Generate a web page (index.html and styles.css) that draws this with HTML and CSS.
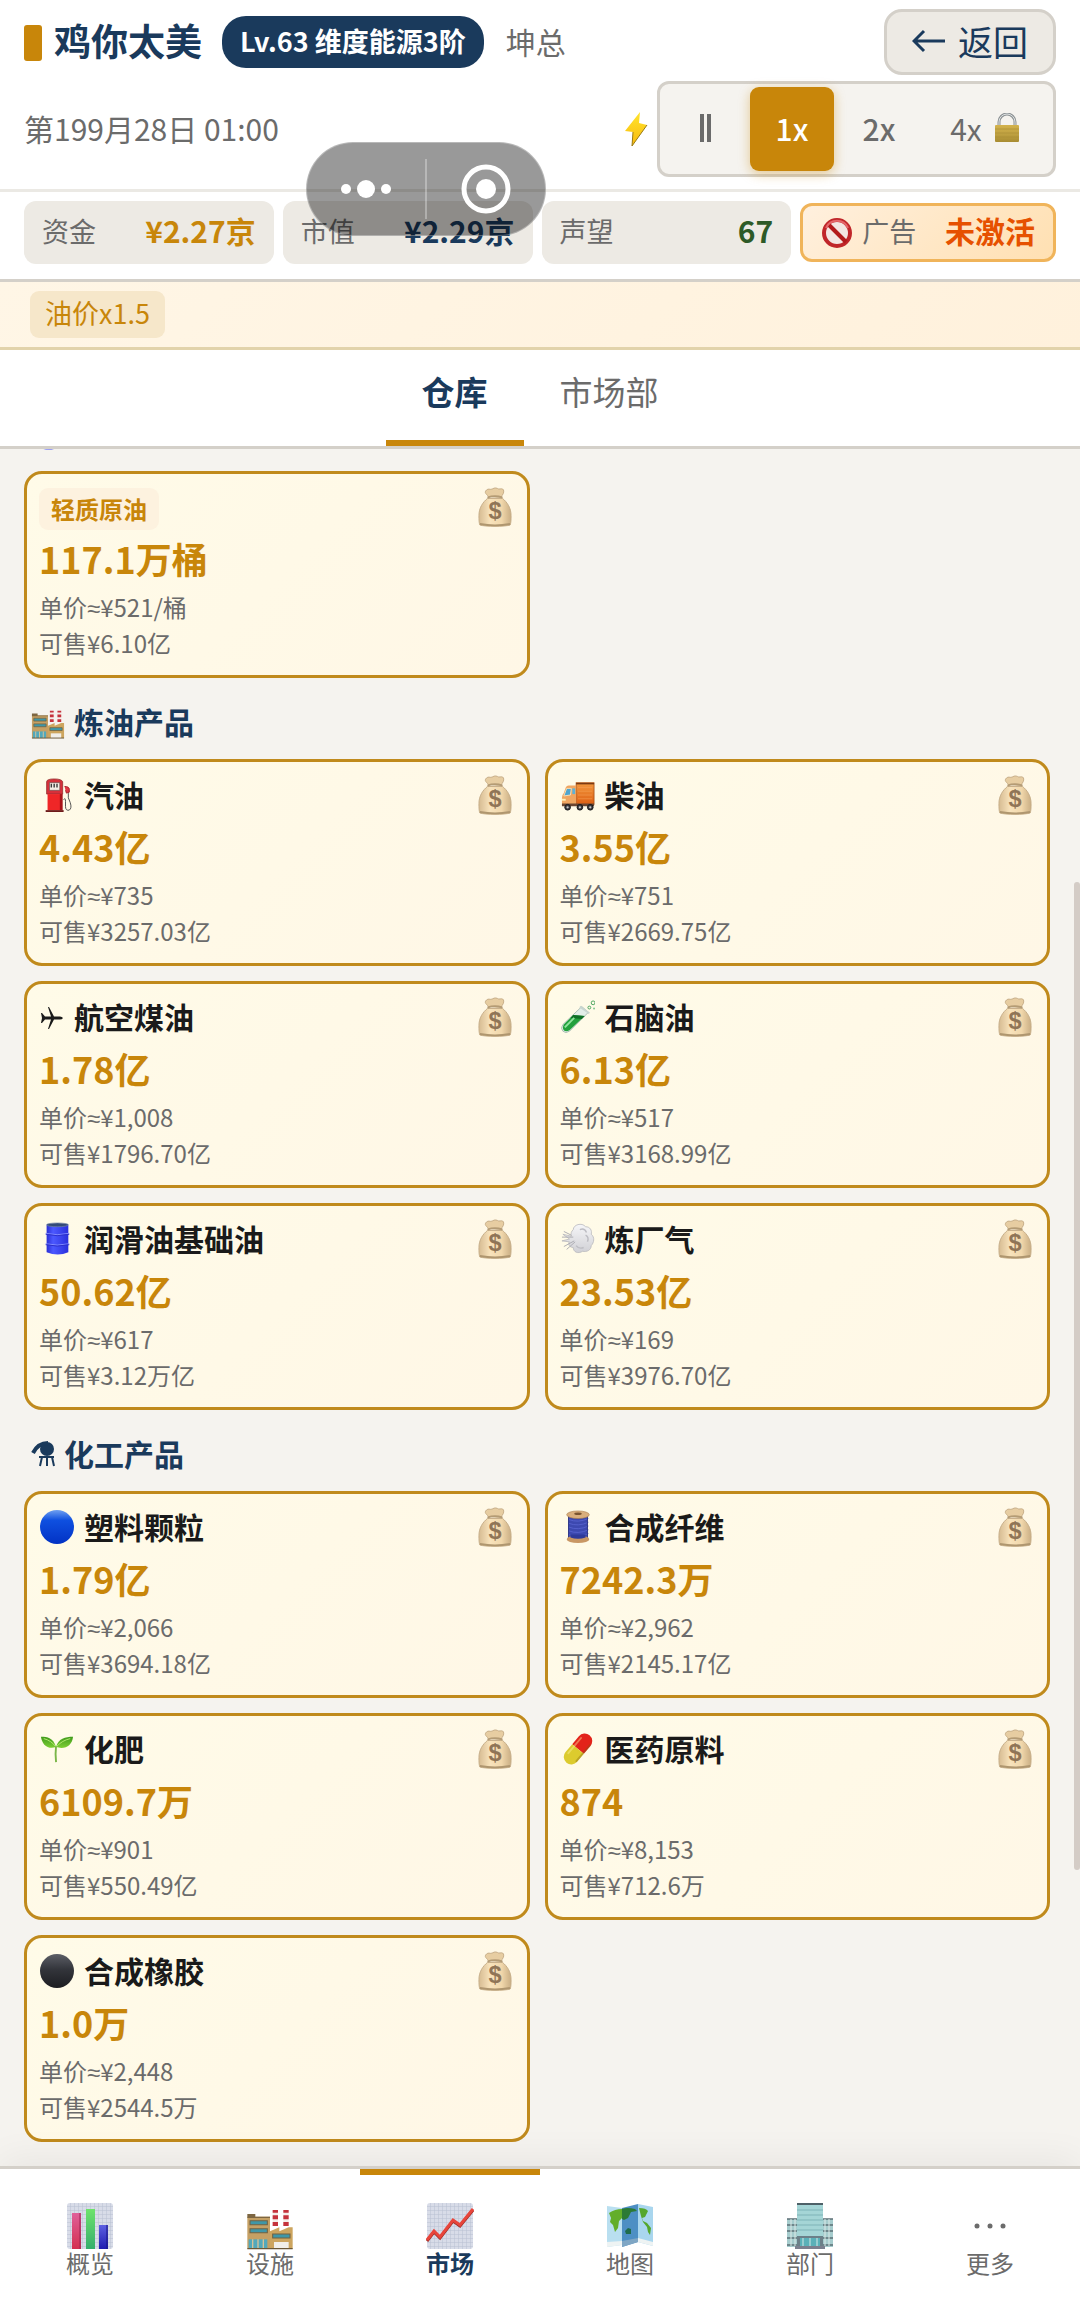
FILE: index.html
```html
<!DOCTYPE html>
<html lang="zh-CN">
<head>
    <meta charset="UTF-8">
    <meta name="viewport" content="width=device-width, initial-scale=1.0">
    <title>仓库</title>
    <link rel="stylesheet" href="styles.css">
</head>
<body>
    <!-- Shared gradients -->
    <svg class="defs" aria-hidden="true">
        <defs>
            <linearGradient id="gBag" x1="0" y1="0" x2="1" y2="0">
                <stop offset="0" stop-color="#c9a877"/><stop offset=".35" stop-color="#f6dcae"/><stop offset=".7" stop-color="#edcd98"/><stop offset="1" stop-color="#b99765"/>
            </linearGradient>
            <linearGradient id="gBolt" x1="0" y1="0" x2="0" y2="1">
                <stop offset="0" stop-color="#ffe52e"/><stop offset="1" stop-color="#f9b90c"/>
            </linearGradient>
            <linearGradient id="gLock" x1="0" y1="0" x2="0" y2="1">
                <stop offset="0" stop-color="#d3b24c"/><stop offset=".5" stop-color="#c0a242"/><stop offset="1" stop-color="#a88c32"/>
            </linearGradient>
            <linearGradient id="gDrum" x1="0" y1="0" x2="1" y2="0">
                <stop offset="0" stop-color="#2a2fd6"/><stop offset=".3" stop-color="#4b58ff"/><stop offset="1" stop-color="#2a30dc"/>
            </linearGradient>
            <linearGradient id="gBlue" x1="0" y1="0" x2="0" y2="1">
                <stop offset="0" stop-color="#6fa0f0"/><stop offset=".3" stop-color="#0f50e0"/><stop offset="1" stop-color="#0232c4"/>
            </linearGradient>
            <linearGradient id="gBlack" x1="0" y1="0" x2="0" y2="1">
                <stop offset="0" stop-color="#5c5e66"/><stop offset=".45" stop-color="#33353b"/><stop offset="1" stop-color="#1c1d21"/>
            </linearGradient>
            <linearGradient id="gLeaf" x1="0" y1="0" x2="0" y2="1">
                <stop offset="0" stop-color="#3f9a1c"/><stop offset="1" stop-color="#7fcf35"/>
            </linearGradient>
            <linearGradient id="gPuff" x1="0" y1="0" x2="0" y2="1">
                <stop offset="0" stop-color="#f6f6f8"/><stop offset="1" stop-color="#d0d0d5"/>
            </linearGradient>
            <linearGradient id="gTruck" x1="0" y1="0" x2="0" y2="1">
                <stop offset="0" stop-color="#f39a3e"/><stop offset="1" stop-color="#dd5f14"/>
            </linearGradient>
            <linearGradient id="gPink" x1="0" y1="0" x2="0" y2="1">
                <stop offset="0" stop-color="#e0609a"/><stop offset="1" stop-color="#d42f50"/>
            </linearGradient>
            <linearGradient id="gGreen" x1="0" y1="0" x2="0" y2="1">
                <stop offset="0" stop-color="#6ee36c"/><stop offset="1" stop-color="#35ae6c"/>
            </linearGradient>
            <linearGradient id="gIndigo" x1="0" y1="0" x2="0" y2="1">
                <stop offset="0" stop-color="#5d60e2"/><stop offset="1" stop-color="#1f1cb0"/>
            </linearGradient>
            <pattern id="pGrid" width="4" height="4" patternUnits="userSpaceOnUse">
                <rect width="4" height="4" fill="#d8dce8"/>
                <path d="M0 0H4M0 0V4" stroke="#b8c0d2" stroke-width="1"/>
            </pattern>
        </defs>
    </svg>

    <!-- Icon sprite -->
    <svg class="sprite" aria-hidden="true">
        <symbol id="i-bag" viewBox="0 0 36 42">
            <path d="M10 12C5 16 1 22 1 30c0 4 0 8 1 10 5 2 27 2 32 0 1-2 1-6 1-10 0-8-4-14-9-18z" fill="url(#gBag)" stroke="#b39468" stroke-width="1"/>
            <path d="M11 10C9 7 6 6 9 3c2-2 4 0 6-1 3-2 5-1 7 0 2 0 4-1 5 1 1 3-1 5-3 8z" fill="#e0bf8b" stroke="#b39468" stroke-width="1"/>
            <path d="M10 11q8-3 16 0" fill="none" stroke="#9c7d50" stroke-width="2"/>
            <path d="M2 39q16 3 32 0" fill="none" stroke="#957648" stroke-width="2"/>
            <text x="18" y="34" text-anchor="middle" class="bag-sign">$</text>
        </symbol>
        <symbol id="i-bolt" viewBox="0 0 24 36">
            <path d="M16 1 1 20l8 1-1 14L23 14l-8-2z" fill="url(#gBolt)"/>
            <path d="m9 21-1 14L23 14" fill="none" stroke="#9a7a14" stroke-width="1"/>
        </symbol>
        <symbol id="i-lock" viewBox="0 0 26 30">
            <path d="M5 13V9a8 8 0 0 1 16 0v4" fill="none" stroke="#8d9294" stroke-width="3"/>
            <path d="M5 13V9a8 8 0 0 1 16 0v4" fill="none" stroke="#dfe3e4" stroke-width="1"/>
            <rect x="1" y="12" width="24" height="17" rx="1" fill="url(#gLock)"/>
            <path d="M1 16h24M1 20h24M1 24h24" stroke="#a88c34" stroke-width="1" opacity=".6"/>
        </symbol>
        <symbol id="i-ban" viewBox="0 0 32 32">
            <circle cx="16" cy="16" r="13" fill="#f3e6e2" stroke="#c0262a" stroke-width="4"/>
            <path d="m7 7 18 18" stroke="#b21a1c" stroke-width="4"/>
            <path d="M5 11a12 12 0 0 1 22 0" fill="none" stroke="#e5676a" stroke-width="2"/>
        </symbol>
        <symbol id="i-drum" viewBox="0 0 36 36">
            <path d="M7 3h23v29q-11 5-23 0z" fill="url(#gDrum)"/>
            <ellipse cx="18.500" cy="3" rx="11.500" ry="2" fill="#334a78" stroke="#7386a8" stroke-width=".7"/>
            <path d="M6 12q12 3 25 0M6 23q12 3 25 0" fill="none" stroke="#8790ff" stroke-width="1"/>
            <path d="M6 13q12 3 25 0M6 24q12 3 25 0" fill="none" stroke="#2a2fc8" stroke-width="1"/>
        </symbol>
        <symbol id="i-factory" viewBox="0 0 36 36">
            <path d="M20 6h4v12h-4zM28 6h4v12h-4z" fill="#f3ece8"/>
            <path d="M20 6h4v2h-4zM20 10h4v3h-4zM20 15h4v3h-4zM28 6h4v2h-4zM28 10h4v3h-4zM28 15h4v3h-4z" fill="#c5323c"/>
            <path d="M1 11h17v24H1z" fill="#c5a064"/>
            <path d="M1 9h6v2H1zM1 11h17v1H1z" fill="#7d6642"/>
            <path d="m18 22 7-3v3l7-3h3v16H18z" fill="#cda55f"/>
            <path d="M3 14h13v3H3zM3 20h13v3H3zM20 24h13v3H20z" fill="#3f97a8" stroke="#716243" stroke-width=".8"/>
            <path d="M2 28h14v7H2z" fill="#52a8bb"/>
            <path d="M5 28v7M9 28v7M13 28v7" stroke="#d6c39a" stroke-width="1"/>
            <path d="M21 30h11v5H21z" fill="#f1efea"/>
            <path d="M1 35h34" stroke="#6b5838" stroke-width="1"/>
        </symbol>
        <symbol id="i-fuel" viewBox="0 0 36 36">
            <path d="M26 9q5 0 5 3v3l-3 1-1-3" fill="#e23a44" stroke="#a31a22" stroke-width="1"/>
            <path d="M25 23q2-3 2 2v5q0 5 4 4 3-2 1-8-3-5-2-10" fill="none" stroke="#4a4a4a" stroke-width="1"/>
            <path d="M7 4q0-3 8-3t9 3v13H7z" fill="#d6303a" stroke="#8f2a2c" stroke-width=".8"/>
            <rect x="10" y="5" width="11" height="8" fill="#f4efe6" stroke="#7d5555" stroke-width=".8"/>
            <path d="M12 6v4M15 6v4M18 6v4" stroke="#3a3a3a" stroke-width="1.500"/>
            <path d="M8 17h15v17H8z" fill="#ef2627"/>
            <path d="M21 17h3v17h-3z" fill="#a91419"/>
            <path d="M6 34h19v2H6z" fill="#6e1a1a"/>
        </symbol>
        <symbol id="i-truck" viewBox="0 0 36 36">
            <rect x="16" y="5" width="19" height="23" fill="url(#gTruck)" stroke="#a54a12" stroke-width=".8"/>
            <path d="M16 6h19" stroke="#7c3a10" stroke-width="1.500"/>
            <path d="M18 10h15M18 14h15M18 18h15M18 22h15" stroke="#f7a055" stroke-width=".6"/>
            <path d="M5 10q1-2 3-2h8v20H1v-7q0-3 2-5z" fill="#f0a661"/>
            <path d="M6 11h5l-1 7-7 1z" fill="#4fa5cf" stroke="#fbe0b5" stroke-width="1"/>
            <path d="M12 11h3v6h-3z" fill="#5fb2d6"/>
            <path d="M1 27h34v3H1z" fill="#6a4632"/>
            <path d="M1 22h4v2H1z" fill="#fff2b8"/>
            <circle cx="7" cy="31" r="3" fill="#3c3c40" stroke="#16161a"/><circle cx="20" cy="31" r="3" fill="#3c3c40" stroke="#16161a"/><circle cx="31" cy="31" r="3" fill="#3c3c40" stroke="#16161a"/>
            <circle cx="7" cy="31" r="1.200" fill="#c8c8cc"/><circle cx="20" cy="31" r="1.200" fill="#c8c8cc"/><circle cx="31" cy="31" r="1.200" fill="#c8c8cc"/>
        </symbol>
        <symbol id="i-plane" viewBox="0 0 26 36">
            <path d="M24 20q-1-1.500-3-1.500h-6L10 9H9l3 9.500H6L3 15H2l1 5-1 5h1l3-3.500h6L9 31h1l5-9.500h6q2 0 3-1.500z" fill="#1a1a1a"/>
        </symbol>
        <symbol id="i-tube" viewBox="0 0 36 36">
            <path d="m22 7 7 6L9 33q-4 3-7 0t0-7z" fill="#e3eee8" stroke="#a9bcb3" stroke-width="1"/>
            <path d="m13 16 12 1L9 32q-4 2-6 0t0-6z" fill="#22a03c"/>
            <path d="m13 16 12 1-3 3-12-1z" fill="#0f6f26"/>
            <path d="M4 29 14 19" stroke="#8fe39d" stroke-width="2"/>
            <path d="m20 7 10 7" stroke="#c9d6d0" stroke-width="2"/>
            <circle cx="30" cy="8" r="1.500" fill="none" stroke="#46a35a"/><circle cx="34" cy="3" r="2" fill="none" stroke="#46a35a"/><circle cx="35" cy="9" r="1" fill="#7cc48a"/>
        </symbol>
        <symbol id="i-puff" viewBox="0 0 36 36">
            <path d="M13 8c0-5 9-8 13-3 5 0 7 4 6 8 4 3 3 9 0 12 0 5-5 7-9 6-5 3-10 1-10-4-4 0-6-4-4-6L1 20l8-2-7-5 9 2c-1-3 0-5 2-7z" fill="url(#gPuff)" stroke="#b4b4ba" stroke-width=".8"/>
            <path d="M3 10l8 4M1 16h12M3 26l11-6M6 29l9-8" stroke="#aaaab0" stroke-width="1"/>
            <path d="M20 8q5-2 7 3M26 14q4 2 2 7M16 25q3 4 8 2" fill="none" stroke="#bdbdc3" stroke-width="1.500"/>
        </symbol>
        <symbol id="i-flask" viewBox="0 0 26 36">
            <circle cx="17" cy="14" r="7" fill="#1a3a5c"/>
            <path d="M18 8Q8 8 3 18" fill="none" stroke="#1a3a5c" stroke-width="4"/>
            <path d="M9 22h15M12 22l-2 9M17 22v9M22 22l2 9" stroke="#1a3a5c" stroke-width="2" fill="none"/>
        </symbol>
        <symbol id="i-blue" viewBox="0 0 36 36"><circle cx="18" cy="18" r="18" fill="url(#gBlue)"/></symbol>
        <symbol id="i-black" viewBox="0 0 36 36"><circle cx="18" cy="18" r="18" fill="url(#gBlack)"/></symbol>
        <symbol id="i-thread" viewBox="0 0 36 36">
            <path d="M8 6h20v24H8z" fill="#3d49b0"/>
            <path d="M8 10q10 4 21-1M8 14q10 4 21-1M8 18q10 4 21-1M8 22q10 4 21-1M8 26q10 4 21-1" fill="none" stroke="#5561cc" stroke-width="1"/>
            <path d="M8 6v24M28 6v24" stroke="#262f82" stroke-width="1"/>
            <ellipse cx="18" cy="31" rx="12" ry="4" fill="#c99764"/>
            <path d="M10 29q8 3 16 0v-3H10z" fill="#2f3a9a"/>
            <ellipse cx="18" cy="5" rx="12" ry="4" fill="#d9ae7c" stroke="#a87a48" stroke-width=".6"/>
            <ellipse cx="18" cy="4" rx="4" ry="1.300" fill="#7a5430"/>
        </symbol>
        <symbol id="i-seed" viewBox="0 0 36 36">
            <path d="M17 16C14 6 8 5 1 5c1 8 7 14 16 11z" fill="url(#gLeaf)"/>
            <path d="M17 16C19 7 27 5 35 5c-1 9-8 14-18 11z" fill="url(#gLeaf)"/>
            <path d="M4 7q8 2 13 9 6-7 15-9" fill="none" stroke="#b6ea72" stroke-width="1"/>
            <path d="M17 15q-1 8 0 17" fill="none" stroke="#7ab648" stroke-width="2"/>
        </symbol>
        <symbol id="i-pill" viewBox="0 0 36 36">
            <g transform="rotate(40 18 18)">
                <path d="M10 18V7a8 8 0 0 1 16 0v11z" fill="#e3231a"/>
                <path d="M10 18h16v11a8 8 0 0 1-16 0z" fill="#dccb2e"/>
                <path d="M13 7v21" stroke="#fff6a8" stroke-width="2" opacity=".4" stroke-linecap="round"/>
                <path d="M25 7v22" stroke="#7a5a10" stroke-width="2" opacity=".35" stroke-linecap="round"/>
            </g>
        </symbol>
        <symbol id="i-bars" viewBox="0 0 48 48">
            <rect x="1" y="1" width="46" height="46" rx="3" fill="url(#pGrid)"/>
            <path d="M6 11h9v36H6z" fill="url(#gPink)"/><path d="M20 7h9v40h-9z" fill="url(#gGreen)"/><path d="M33 23h9v24h-9z" fill="url(#gIndigo)"/>
            <path d="M14 11v36" stroke="#9c2352"/><path d="M41 23v24" stroke="#171480"/>
        </symbol>
        <symbol id="i-trend" viewBox="0 0 48 48">
            <rect x="1" y="1" width="46" height="46" rx="3" fill="url(#pGrid)"/>
            <path d="m1 38 7-9 6 6 13-17 7 5L47 7" fill="none" stroke="#9d2a24" stroke-width="3" transform="translate(0 1)"/>
            <path d="m1 38 7-9 6 6 13-17 7 5L47 7" fill="none" stroke="#e8453b" stroke-width="3"/>
        </symbol>
        <symbol id="i-map" viewBox="0 0 48 48">
            <path d="m1 4 15 2v37l-15 2z" fill="#b9dff0"/><path d="M16 6 32 2v38l-16 5z" fill="#4d8fc4"/><path d="m32 2 15 3v39l-15-4z" fill="#a9d6ee"/>
            <path d="m1 40 15-1v4l-15 2zM32 36l15 4v4l-15-4z" fill="#eef3f3"/><path d="m16 39 16-3v4l-16 5z" fill="#7fa6c4"/>
            <path d="M3 11q6-4 13-4v9l-3 3-1 7-3 4-2-7-3-3 1-4z" fill="#63ae2a"/>
            <path d="M16 7q5-2 13 0l2 2-6 1-3 6-4 2-2-1z" fill="#2c7a35"/>
            <path d="m19 29 3-3 3 1v5h-5z" fill="#1f6d4c"/>
            <path d="M33 6q7 0 9 3l-3 6-3 1 1 3 4 2 4 5-1 7-2-3-1-5-4-5-2-6z" fill="#55a72d"/>
        </symbol>
        <symbol id="i-office" viewBox="0 0 48 48">
            <path d="M1 17h12v28H1zM35 17h12v28H35z" fill="#a6cccd"/>
            <path d="M1 17h12M1 23h12M1 29h12M1 36h12M1 43h12M35 17h12M35 23h12M35 29h12M35 36h12M35 43h12" stroke="#5c6f75" stroke-width="1.500"/>
            <path d="M5 17v27M9 17v27M39 17v27M43 17v27" stroke="#dcebe9" stroke-width="1"/>
            <path d="M11 2h26v33H11z" fill="#a5d5d6"/>
            <path d="M11 2h26" stroke="#4e6168" stroke-width="2"/>
            <path d="M11 8h26M11 13h26M11 18h26M11 23h26M11 28h26" stroke="#7fb3b7" stroke-width="1"/>
            <path d="M11 34h26v10H11z" fill="#6c7f88"/>
            <path d="M14 36h20v8H14z" fill="#5ab0b8"/>
            <path d="M17 36v8M24 36v8M31 36v8" stroke="#d4e8e6" stroke-width="1"/>
            <path d="M9 44h30v3H9z" fill="#7b7f8e"/>
        </symbol>
        <symbol id="i-more" viewBox="0 0 48 48">
            <circle cx="11" cy="24" r="2.500" fill="#6b6b6b"/><circle cx="24" cy="24" r="2.500" fill="#6b6b6b"/><circle cx="37" cy="24" r="2.500" fill="#6b6b6b"/>
        </symbol>
    </svg>

    <header class="header">
        <div class="header-row">
            <h1 class="company">鸡你太美</h1>
            <span class="level-badge">Lv.63 维度能源3阶</span>
            <span class="owner">坤总</span>
            <button class="back-btn">
                <svg class="arrow" viewBox="0 0 34 28"><path d="M33 14H2M12 4 2 14l10 10" fill="none" stroke="#1a3a5c" stroke-width="3"/></svg>
                返回
            </button>
        </div>
        <div class="header-row">
            <span class="date">第199月28日 01:00</span>
            <svg class="bolt"><use href="#i-bolt"/></svg>
            <div class="speed">
                <button class="speed-btn" aria-label="暂停"><span class="pause"></span></button>
                <button class="speed-btn active">1x</button>
                <button class="speed-btn">2x</button>
                <button class="speed-btn locked">4x <svg class="lock"><use href="#i-lock"/></svg></button>
            </div>
        </div>
    </header>

    <div class="stats">
        <div class="stat"><span class="stat-label">资金</span><span class="stat-value gold">¥2.27京</span></div>
        <div class="stat"><span class="stat-label">市值</span><span class="stat-value navy">¥2.29京</span></div>
        <div class="stat"><span class="stat-label">声望</span><span class="stat-value green">67</span></div>
        <button class="stat ad"><svg class="ban"><use href="#i-ban"/></svg><span class="stat-label">广告</span><span class="stat-value orange">未激活</span></button>
    </div>

    <div class="events"><span class="event-chip">油价x1.5</span></div>

    <div class="tabs">
        <button class="tab active">仓库</button>
        <button class="tab">市场部</button>
    </div>

    <main class="content">
        <h2 class="section-title first"><svg class="emoji"><use href="#i-drum"/></svg></h2>
        <div class="card-grid">
            <div class="card">
                <div class="card-head"><span class="oil-tag">轻质原油</span><button class="sell-btn" aria-label="出售"><svg><use href="#i-bag"/></svg></button></div>
                <div class="amount">117.1万桶</div>
                <div class="info">单价<span class="approx">≈</span>¥521/桶</div>
                <div class="info">可售¥6.10亿</div>
            </div>
        </div>

        <h2 class="section-title"><svg class="emoji"><use href="#i-factory"/></svg>炼油产品</h2>
        <div class="card-grid">
            <div class="card">
                <div class="card-head"><h3><svg class="emoji"><use href="#i-fuel"/></svg>汽油</h3><button class="sell-btn" aria-label="出售"><svg><use href="#i-bag"/></svg></button></div>
                <div class="amount">4.43亿</div>
                <div class="info">单价<span class="approx">≈</span>¥735</div>
                <div class="info">可售¥3257.03亿</div>
            </div>
            <div class="card">
                <div class="card-head"><h3><svg class="emoji"><use href="#i-truck"/></svg>柴油</h3><button class="sell-btn" aria-label="出售"><svg><use href="#i-bag"/></svg></button></div>
                <div class="amount">3.55亿</div>
                <div class="info">单价<span class="approx">≈</span>¥751</div>
                <div class="info">可售¥2669.75亿</div>
            </div>
            <div class="card">
                <div class="card-head"><h3><svg class="emoji narrow"><use href="#i-plane"/></svg>航空煤油</h3><button class="sell-btn" aria-label="出售"><svg><use href="#i-bag"/></svg></button></div>
                <div class="amount">1.78亿</div>
                <div class="info">单价<span class="approx">≈</span>¥1,008</div>
                <div class="info">可售¥1796.70亿</div>
            </div>
            <div class="card">
                <div class="card-head"><h3><svg class="emoji"><use href="#i-tube"/></svg>石脑油</h3><button class="sell-btn" aria-label="出售"><svg><use href="#i-bag"/></svg></button></div>
                <div class="amount">6.13亿</div>
                <div class="info">单价<span class="approx">≈</span>¥517</div>
                <div class="info">可售¥3168.99亿</div>
            </div>
            <div class="card">
                <div class="card-head"><h3><svg class="emoji"><use href="#i-drum"/></svg>润滑油基础油</h3><button class="sell-btn" aria-label="出售"><svg><use href="#i-bag"/></svg></button></div>
                <div class="amount">50.62亿</div>
                <div class="info">单价<span class="approx">≈</span>¥617</div>
                <div class="info">可售¥3.12万亿</div>
            </div>
            <div class="card">
                <div class="card-head"><h3><svg class="emoji"><use href="#i-puff"/></svg>炼厂气</h3><button class="sell-btn" aria-label="出售"><svg><use href="#i-bag"/></svg></button></div>
                <div class="amount">23.53亿</div>
                <div class="info">单价<span class="approx">≈</span>¥169</div>
                <div class="info">可售¥3976.70亿</div>
            </div>
        </div>

        <h2 class="section-title"><svg class="emoji narrow"><use href="#i-flask"/></svg>化工产品</h2>
        <div class="card-grid">
            <div class="card">
                <div class="card-head"><h3><svg class="emoji"><use href="#i-blue"/></svg>塑料颗粒</h3><button class="sell-btn" aria-label="出售"><svg><use href="#i-bag"/></svg></button></div>
                <div class="amount">1.79亿</div>
                <div class="info">单价<span class="approx">≈</span>¥2,066</div>
                <div class="info">可售¥3694.18亿</div>
            </div>
            <div class="card">
                <div class="card-head"><h3><svg class="emoji"><use href="#i-thread"/></svg>合成纤维</h3><button class="sell-btn" aria-label="出售"><svg><use href="#i-bag"/></svg></button></div>
                <div class="amount">7242.3万</div>
                <div class="info">单价<span class="approx">≈</span>¥2,962</div>
                <div class="info">可售¥2145.17亿</div>
            </div>
            <div class="card">
                <div class="card-head"><h3><svg class="emoji"><use href="#i-seed"/></svg>化肥</h3><button class="sell-btn" aria-label="出售"><svg><use href="#i-bag"/></svg></button></div>
                <div class="amount">6109.7万</div>
                <div class="info">单价<span class="approx">≈</span>¥901</div>
                <div class="info">可售¥550.49亿</div>
            </div>
            <div class="card">
                <div class="card-head"><h3><svg class="emoji"><use href="#i-pill"/></svg>医药原料</h3><button class="sell-btn" aria-label="出售"><svg><use href="#i-bag"/></svg></button></div>
                <div class="amount">874</div>
                <div class="info">单价<span class="approx">≈</span>¥8,153</div>
                <div class="info">可售¥712.6万</div>
            </div>
            <div class="card">
                <div class="card-head"><h3><svg class="emoji"><use href="#i-black"/></svg>合成橡胶</h3><button class="sell-btn" aria-label="出售"><svg><use href="#i-bag"/></svg></button></div>
                <div class="amount">1.0万</div>
                <div class="info">单价<span class="approx">≈</span>¥2,448</div>
                <div class="info">可售¥2544.5万</div>
            </div>
        </div>
        <div class="scroll-thumb"></div>
    </main>

    <nav class="bottom-nav">
        <button class="nav-item"><svg><use href="#i-bars"/></svg>概览</button>
        <button class="nav-item"><svg><use href="#i-factory"/></svg>设施</button>
        <button class="nav-item active"><svg><use href="#i-trend"/></svg>市场</button>
        <button class="nav-item"><svg><use href="#i-map"/></svg>地图</button>
        <button class="nav-item"><svg><use href="#i-office"/></svg>部门</button>
        <button class="nav-item"><svg><use href="#i-more"/></svg>更多</button>
    </nav>

    <!-- Floating capsule menu -->
    <div class="capsule">
        <button aria-label="菜单"><svg viewBox="0 0 52 52"><circle cx="6" cy="26" r="5"/><circle cx="26" cy="26" r="9"/><circle cx="46" cy="26" r="5"/></svg></button>
        <button aria-label="关闭"><svg viewBox="0 0 52 52"><circle cx="26" cy="26" r="22" class="ring"/><circle cx="26" cy="26" r="10"/></svg></button>
    </div>
</body>
</html>
```

FILE: styles.css
```css
* {
    box-sizing: border-box;
}
body {
    margin: 0;
    height: 100vh;
    display: flex;
    flex-direction: column;
    overflow: hidden;
    background: #f5f3ef;
    color: #1a1a1a;
    font-family: "Noto Sans CJK SC", "Noto Sans", sans-serif;
    font-size: 30px;
    line-height: 42px;
}
button {
    margin: 0;
    padding: 0;
    border: 0;
    background: none;
    color: inherit;
    font: inherit;
}
h1, h2, h3 {
    margin: 0;
    font-size: 30px;
    font-weight: 700;
}
svg {
    display: block;
    flex: none;
}
.defs {
    position: absolute;
    width: 0;
    height: 0;
}
.sprite {
    display: none;
}

/* Header */
.header {
    display: flex;
    flex-direction: column;
    gap: 6px;
    padding: 9px 24px 12px;
    background: #fff;
    border-bottom: 3px solid #ebe9e4;
}
.header-row {
    display: flex;
    align-items: center;
}
.company {
    display: flex;
    align-items: center;
    gap: 12px;
    padding-bottom: 4px;
    font-size: 37px;
    color: #1a3a5c;
}
.company::before {
    content: "";
    align-self: flex-end;
    width: 18px;
    height: 36px;
    border-radius: 3px;
    background: #c8860a;
}
.level-badge {
    margin-left: 20px;
    padding: 4px 18px 6px;
    border-radius: 24px;
    background: #1a3a5c;
    color: #fff;
    font-size: 27px;
    font-weight: 700;
}
.owner {
    margin-left: 22px;
    padding-bottom: 3px;
    color: #6b6b6b;
}
.back-btn {
    display: flex;
    align-items: center;
    gap: 12px;
    height: 66px;
    margin-left: auto;
    padding: 0 25px 3px;
    border: 3px solid #d4d0c9;
    border-radius: 18px;
    background: #edeae4;
    color: #1a3a5c;
    font-size: 35px;
}
.arrow {
    width: 34px;
    height: 28px;
}
.date {
    padding-bottom: 3px;
    color: #6b6b6b;
}
.bolt {
    width: 24px;
    height: 36px;
    margin-left: auto;
    margin-right: 9px;
}
.speed {
    display: flex;
    gap: 3px;
    padding: 3px;
    border: 3px solid #d4d0c9;
    border-radius: 12px;
    background: #f5f3ef;
}
.speed-btn {
    display: flex;
    align-items: center;
    justify-content: center;
    gap: 12px;
    width: 84px;
    height: 84px;
    padding-bottom: 3px;
    border-radius: 9px;
    color: #6b6b6b;
    font-weight: 500;
}
.speed-btn.active {
    background: #c8860a;
    color: #fff;
    box-shadow: 0 3px 12px rgba(200, 134, 10, 0.4);
}
.speed-btn.locked {
    width: 126px;
    padding-right: 4px;
    font-weight: 400;
}
.pause {
    width: 11px;
    height: 28px;
    border: solid #6b6b6b;
    border-width: 0 4px;
}
.lock {
    width: 26px;
    height: 30px;
}

/* Stats */
.stats {
    display: flex;
    align-items: center;
    gap: 9px;
    padding: 9px 24px 15px;
    background: #fff;
    border-bottom: 3px solid #d4d0c9;
}
.stat {
    display: flex;
    flex: 1 1 0;
    align-items: center;
    justify-content: space-between;
    height: 63px;
    padding: 0 18px;
    border-radius: 12px;
    background: #edeae4;
}
.stat-label {
    padding-bottom: 4px;
    color: #6b6b6b;
    font-size: 27px;
}
.stat-value {
    padding-bottom: 5px;
    font-weight: 700;
}
.gold {
    color: #c8860a;
}
.navy {
    color: #1a3a5c;
}
.green {
    color: #2d5a27;
}
.orange {
    color: #e65100;
}
.stat.ad {
    height: 59px;
    border: 3px solid #f0b45a;
    background: linear-gradient(135deg, #fff0de, #ffe0b2);
}
.ban {
    width: 32px;
    height: 32px;
}
.ad .stat-label {
    margin-left: 9px;
    margin-right: auto;
}

/* Event bar */
.events {
    display: flex;
    padding: 9px 30px;
    background: linear-gradient(135deg, #fff6e6, #fff1dc);
    border-bottom: 3px solid #e2d3ab;
}
.event-chip {
    padding: 1px 15px 4px;
    border-radius: 9px;
    background: #f6e7ca;
    color: #c8860a;
    font-size: 27px;
}

/* Tabs */
.tabs {
    display: flex;
    justify-content: center;
    background: #fff;
    border-bottom: 3px solid #d4d0c9;
}
.tab {
    height: 96px;
    padding: 0 36px 9px;
    color: #6b6b6b;
    font-size: 33px;
    border-bottom: 6px solid transparent;
}
.tab.active {
    color: #1a3a5c;
    font-weight: 700;
    border-bottom-color: #c8860a;
}

/* Warehouse */
.content {
    position: relative;
    flex: 1;
    overflow: hidden;
    padding: 0 30px 0 24px;
}
.section-title {
    display: flex;
    align-items: center;
    gap: 8px;
    height: 42px;
    margin: 22px 0 17px;
    padding-left: 6px;
    color: #1a3a5c;
}
/* list is scrolled, the first title sits under the tabs */
.section-title.first {
    margin-top: -37px;
}
.emoji {
    width: 34px;
    height: 34px;
    margin: 2px 1px 0;
}
.emoji.narrow {
    width: 26px;
    height: 36px;
    margin: 0;
}
.card-grid {
    display: grid;
    grid-template-columns: 1fr 1fr;
    gap: 15px;
}
.card {
    padding: 11px 12px 14px;
    border: 3px solid #c08a1c;
    border-radius: 18px;
    background: linear-gradient(135deg, #fffbe8, #fff7e6);
}
.card-head {
    display: flex;
    align-items: center;
    justify-content: space-between;
    height: 42px;
    margin-bottom: 4px;
}
.card h3 {
    display: flex;
    align-items: center;
    gap: 9px;
}
.oil-tag {
    margin-top: 5px;
    padding: 0 12px;
    border-radius: 9px;
    background: #fdf2df;
    color: #c8860a;
    font-size: 24px;
    font-weight: 700;
}
.sell-btn {
    padding: 2px 3px 0 0;
    opacity: 0.75;
}
.sell-btn svg {
    width: 34px;
    height: 40px;
}
.bag-sign {
    fill: #6b4a28;
    font-family: "Liberation Sans", sans-serif;
    font-size: 25px;
    font-weight: 700;
}
.amount {
    margin-bottom: 4px;
    color: #c8860a;
    font-size: 36px;
    font-weight: 700;
    line-height: 54px;
}
.info {
    color: #6b6b6b;
    font-size: 24px;
    line-height: 36px;
}
.approx {
    font-family: "Noto Sans", sans-serif;
    line-height: 0;
}
.scroll-thumb {
    position: absolute;
    top: 433px;
    right: 0;
    width: 6px;
    height: 988px;
    border-radius: 3px;
    background: #d4ccc6;
}

/* Bottom navigation */
.bottom-nav {
    display: grid;
    grid-template-columns: repeat(6, 1fr);
    position: relative;
    background: #fff;
    border-top: 3px solid #d4d0c9;
    box-shadow: 0 -6px 36px rgba(0, 0, 0, 0.06);
}
.nav-item {
    display: flex;
    flex-direction: column;
    align-items: center;
    padding: 27px 0 34px;
    border-top: 6px solid transparent;
    color: #6b6b6b;
    font-size: 24px;
    line-height: 26px;
}
.nav-item svg {
    width: 48px;
    height: 48px;
}
.nav-item.active {
    border-top-color: #c8860a;
    color: #1a3a5c;
    font-weight: 700;
}

/* Capsule */
.capsule {
    position: fixed;
    top: 142px;
    left: 306px;
    display: flex;
    align-items: center;
    width: 240px;
    height: 94px;
    border: 1px solid rgba(255, 255, 255, 0.3);
    border-radius: 47px;
    background: rgba(0, 0, 0, 0.4);
}
.capsule button {
    display: flex;
    flex: 1;
    align-items: center;
    justify-content: center;
    height: 60px;
}
.capsule button + button {
    border-left: 2px solid rgba(255, 255, 255, 0.3);
}
.capsule svg {
    width: 52px;
    height: 52px;
    fill: #fff;
}
.capsule .ring {
    fill: none;
    stroke: #fff;
    stroke-width: 5;
}
```
